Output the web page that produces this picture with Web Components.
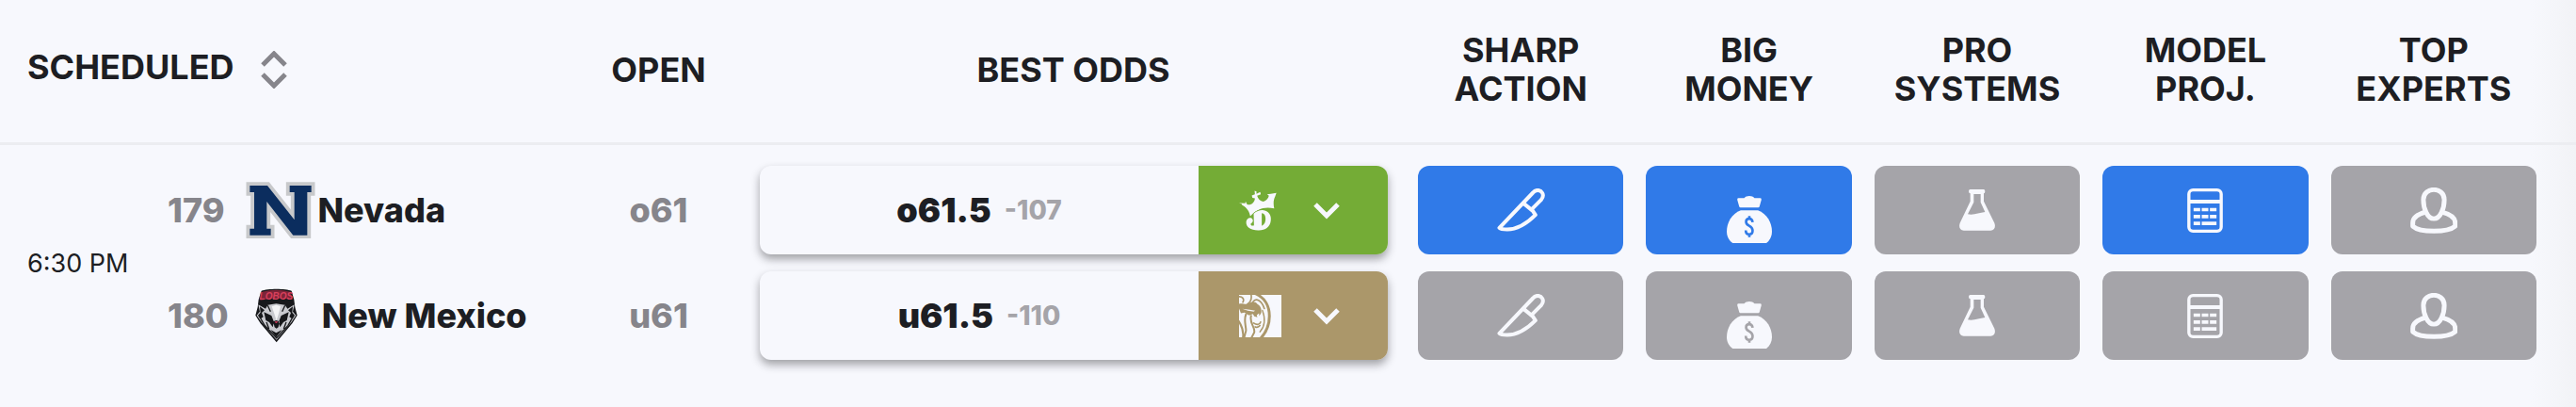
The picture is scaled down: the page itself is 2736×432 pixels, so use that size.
<!DOCTYPE html>
<html lang="en">
<head>
<meta charset="utf-8">
<meta name="viewport" content="width=device-width, initial-scale=1">
<title>Odds board</title>
<style>
  html { background: #f7f8fd; }
  body { margin: 0; font-family: Inter, "Liberation Sans", sans-serif; color: #1d1e23; }
</style>
</head>
<body>
<odds-board></odds-board>

<script>
const INK = '#f7f8fd';

const ICONS = {
  knife: { w: 51, h: 46, box: '87 91.500 152 138', art: `
    <g fill="none" stroke="${INK}" stroke-width="12" stroke-linejoin="round" stroke-linecap="round">
      <path d="M94 217L201 105C210 94 225 95 231 106C235 114 233 121 227 128L197 158L209 176C180 205 150 222 119 222C107 222 98 221 94 217Z"/>
      <path d="M172 140L197 160"/>
    </g>` },
  bag: { w: 48, h: 50, box: '816 113 145 151', lift: 20, art: `
    <path fill="${INK}" d="M854 120H872C879 111 898 111 905 120H923Q928 120 927 126L921 147Q920 150 917 150H860Q857 150 856 147L850 126Q849 120 854 120Z"/>
    <path fill="${INK}" d="M861 159H916C945 170 961 198 961 227C961 242 955 255 943 264H835C822 255 816 242 816 227C816 198 832 170 861 159Z"/>
    <path fill="none" stroke="var(--tile)" stroke-width="8" d="M899 197C898 189 894 186 888 186C881 186 878 190 878 196C878 211 899 206 899 224C899 232 895 236 888 236C881 236 877 232 877 223M888.500 177V187M888.500 235V245"/>` },
  flask: { w: 38, h: 44, box: '96 93 114 132', art: `
    <path fill="${INK}" fill-rule="evenodd" d="M131 93H173Q178 93 178 99Q178 106 174 106V131L208 200C213 214 207 223 196 224H110C99 223 93 214 98 200L131 131V106Q126 106 126 99Q126 93 131 93ZM142 108V134L123 172C143 176 158 167 178 165L164 134V108Z"/>` },
  calculator: { w: 38, h: 47, box: '821 87 113 141', art: `
    <rect x="826" y="92" width="103" height="131" rx="13" fill="none" stroke="${INK}" stroke-width="10"/>
    <path fill="${INK}" d="M826 123H929V135H826ZM841 149H862V160H841ZM867 149H888V160H867ZM893 149H914V160H893ZM841 171H862V182H841ZM867 171H888V182H867ZM893 171H914V182H893ZM841 193H862V204H841ZM867 193H914V204H867Z"/>` },
  expert: { w: 50, h: 49, box: '269 84 151 148', art: `
    <g fill="none" stroke="${INK}" stroke-width="15" stroke-linejoin="round">
      <path d="M344.500 91C359 91 378 100 378 123C378 150 366 184 344.500 184C323 184 311 150 311 123C311 100 330 91 344.500 91Z"/>
      <path d="M318 163C292 170 277 182 277 197V208C300 229 389 229 413 208V197C413 182 397 170 371 163"/>
    </g>` }
};

const LOGOS = {
  nevada: { w: 74, h: 60, box: '64 67 222 180', art: `
    <path fill="none" stroke="#c8c9cb" stroke-width="23" d="M77 79H133L219 188V100H204V79H273V100H260V237H215L131 130V216H144V237H77V216H91V100H77Z"/>
    <path fill="#0b2d5e" d="M77 79H133L219 188V100H204V79H273V100H260V237H215L131 130V216H144V237H77V216H91V100H77Z"/>` },
  lobos: { w: 74, h: 60, box: '76 403 222 180', art: `
    <path fill="#17181b" d="M114 414C132 406 192 406 210 414L218 442L221 466L228 492L212 518L162 578L111 518L95 492L102 466L105 442Z"/>
    <path fill="#7d2438" d="M117 417Q161 405 206 417L213 442Q161 434 110 444Z"/>
    <text x="161" y="442" text-anchor="middle" font-family="Liberation Sans" font-weight="700" font-style="italic" font-size="30" fill="#d8405c">LOBOS</text>
    <path fill="#c9cacf" d="M104 458L127 471L134 459L161 455L189 459L197 471L219 458L214 480L224 492L209 515L162 570L115 515L99 492L109 480Z"/>
    <path fill="#17181b" d="M109 464L124 476L115 484L120 497L110 504L103 492L111 483ZM214 464L199 476L208 484L203 497L213 504L220 492L212 483ZM122 482L146 493L154 513L150 530L139 514L128 508ZM201 482L177 493L169 513L173 530L184 514L195 508ZM151 512L161 508L172 512L168 530L162 534L156 530ZM161 562L143 538L161 548L180 538Z"/>
    <path fill="none" stroke="#17181b" stroke-width="4" d="M112 503L124 524L162 564L199 524L211 503M130 514L138 535M193 514L185 535M134 461L143 480M189 461L180 480"/>
    <path fill="#f4f4f6" d="M147 464L161 459L175 464L169 487L162 509L155 487Z"/>
    <path fill="#b8334e" d="M156 511H167L163 517H159Z"/>` },
  crown: { w: 40, h: 43, box: '176 94 121 129', art: `
    <path fill="${INK}" d="M226 95L232 97V105L244 99L246 106L234 111C237 121 244 128 254 130C264 127 270 119 272 111L266 106L278 105L296 102L292 113C286 124 286 138 289 152C258 144 233 154 212 177C210 163 202 149 186 141L185 137L176 134L196 135L197 129L202 139C216 142 226 132 227 119L219 118L217 110L227 106Z"/>
    <path fill="${INK}" fill-rule="evenodd" stroke="var(--tile)" stroke-width="4" paint-order="stroke" d="M223 168C235 158 250 155 261 159C275 164 280 178 278 191C276 211 260 223 237 222C213 222 198 211 199 195C200 185 208 180 216 183C223 188 222 197 214 200C212 206 218 209 224 206ZM249 167V208C259 202 262 193 261 182C260 173 257 168 249 167Z"/>` },
  lion: { w: 45, h: 45, box: '168 427 134 134', art: `
    <path fill="${INK}" d="M168 427H302V561H168Z"/>
    <g fill="none" stroke="var(--tile)" stroke-linecap="round">
      <path stroke-width="9" d="M222 424C250 437 264 464 264 494C264 523 254 546 235 566"/>
      <path stroke-width="5" d="M206 425C209 440 204 450 195 456M166 433C178 431 186 440 180 450M212 449C222 434 240 446 248 470"/>
      <path stroke-width="6" d="M190 488C182 507 190 523 190 540L184 563M206 493C200 519 220 527 216 546L207 563M167 510C176 524 184 541 180 563"/>
      <path stroke-width="4" d="M242 476C251 500 250 526 234 544"/>
      <path stroke-width="5" d="M219 528Q228 532 234 524M214 516C225 523 234 521 236 513"/>
    </g>
    <path fill="var(--tile)" d="M168 455C180 452 189 460 199 454C211 447 221 449 226 456C236 461 240 472 238 484L232 494L231 485L224 491L226 498L216 495L212 487L200 492L185 483L174 485L168 470Z"/>
    <path fill="${INK}" d="M178 471L202 474L219 477L214 480L196 477Z"/>` }
};

const drawing = d =>
  `<svg width="${d.w}" height="${d.h}" viewBox="${d.box}" aria-hidden="true">${d.art}</svg>`;

class SignalTile extends HTMLElement {
  constructor() {
    super();
    const icon = ICONS[this.getAttribute('icon')];
    this.attachShadow({ mode: 'open' }).innerHTML = `
      <style>
        :host { display: block; --tile: #a5a4a9; }
        :host([active]) { --tile: #307ae8; }
        button { display: flex; align-items: center; justify-content: center; box-sizing: border-box;
          width: 100%; height: 94px; padding: ${icon.lift || 0}px 0 0; border: 0; border-radius: 12px;
          background: var(--tile); cursor: pointer; }
        svg { display: block; }
      </style>
      <button type="button" aria-label="${this.getAttribute('label')}">${drawing(icon)}</button>`;
  }
}
customElements.define('signal-tile', SignalTile);

class BestOdds extends HTMLElement {
  constructor() {
    super();
    this.attachShadow({ mode: 'open' }).innerHTML = `
      <style>
        :host { display: flex; height: 94px; border-radius: 12px; overflow: hidden;
          background: #f7f8fd; box-shadow: 0 5px 10px rgba(29, 30, 35, .4); }
        :host([book="crown"]) { --tile: #74ac36; }
        :host([book="lion"]) { --tile: #ab976a; }
        .line { flex: 1; display: flex; align-items: center; justify-content: center; gap: 14px;
          font-size: 36px; font-weight: 900; }
        .price { font-size: 28px; font-weight: 800; color: #a5a4a9; }
        button { display: flex; align-items: center; justify-content: space-between; width: 201px;
          padding: 0 50px 0 43px; border: 0; background: var(--tile); cursor: pointer; }
        svg { display: block; }
      </style>
      <div class="line"><slot></slot><span class="price"><slot name="price"></slot></span></div>
      <button type="button" aria-label="Choose sportsbook">
        ${drawing(LOGOS[this.getAttribute('book')])}
        <svg width="30" height="20" viewBox="0 0 30 20" aria-hidden="true"><path d="M3 4L15 16L27 4" fill="none" stroke="${INK}" stroke-width="5"/></svg>
      </button>`;
  }
}
customElements.define('best-odds', BestOdds);

class TeamLabel extends HTMLElement {
  constructor() {
    super();
    this.attachShadow({ mode: 'open' }).innerHTML = `
      <style>
        :host { display: flex; align-items: center; font-size: 36px; font-weight: 800; white-space: nowrap; }
        .number { color: #86858b; margin-right: 22px; }
        svg { display: block; margin-right: 3px; }
      </style>
      <span class="number"><slot name="number"></slot></span>${drawing(LOGOS[this.getAttribute('logo')])}<slot></slot>`;
  }
}
customElements.define('team-label', TeamLabel);

class SortButton extends HTMLElement {
  constructor() {
    super();
    this.attachShadow({ mode: 'open' }).innerHTML = `
      <style>
        :host { display: block; }
        button { display: flex; align-items: flex-start; gap: 28px; padding: 0 0 3px; border: 0; background: none;
          font: inherit; color: inherit; text-transform: inherit; cursor: pointer; }
        svg { display: block; margin-top: 3px; }
      </style>
      <button type="button"><slot></slot>
        <svg width="28" height="40" viewBox="0 0 28 40" aria-hidden="true"><path d="M2 15L14 3L26 15M2 25L14 37L26 25" fill="none" stroke="#86858b" stroke-width="5"/></svg>
      </button>`;
  }
}
customElements.define('sort-button', SortButton);

const tiles = active => [
  ['knife', 'Sharp action'], ['bag', 'Big money'], ['flask', 'Pro systems'],
  ['calculator', 'Model projections'], ['expert', 'Top experts']
].map(([icon, label]) =>
  `<td class="signal"><signal-tile icon="${icon}" label="${label}"${active.includes(icon) ? ' active' : ''}></signal-tile></td>`
).join('');

class OddsBoard extends HTMLElement {
  constructor() {
    super();
    this.attachShadow({ mode: 'open' }).innerHTML = `
      <style>
        :host { display: block; min-height: 100vh;
          background: linear-gradient(to left, #f2f3f6, #f7f8fd 48px); }
        table { width: 100%; table-layout: fixed; border-collapse: separate; border-spacing: 0; }
        .c-time { width: 178px; } .c-team { width: 435px; } .c-open { width: 173px; }
        .c-best { width: 708px; } .c-edge { width: 30px; }
        th { height: 148px; padding: 0 0 3px; border-bottom: 3px solid #ecedf1;
          font-size: 36px; line-height: 41px; font-weight: 700; text-transform: uppercase; text-align: center; }
        th:first-child { padding-left: 29px; }
        tbody::before { content: ""; display: table-row; height: 13px; }
        td { height: 112px; padding: 0; vertical-align: middle; }
        .time { padding-left: 29px; font-size: 27px; white-space: nowrap; }
        .open { font-size: 36px; font-weight: 800; color: #86858b; text-align: center; }
        .best { padding: 0 20px 0 21px; }
        .signal { padding: 0 12px; }
      </style>
      <table>
        <colgroup>
          <col class="c-time"><col class="c-team"><col class="c-open"><col class="c-best">
          <col span="5"><col class="c-edge">
        </colgroup>
        <thead>
          <tr>
            <th scope="col" colspan="2"><sort-button>Scheduled</sort-button></th>
            <th scope="col">Open</th>
            <th scope="col">Best Odds</th>
            <th scope="col">Sharp<br>Action</th>
            <th scope="col">Big<br>Money</th>
            <th scope="col">Pro<br>Systems</th>
            <th scope="col">Model<br>Proj.</th>
            <th scope="col">Top<br>Experts</th>
            <th aria-hidden="true"></th>
          </tr>
        </thead>
        <tbody>
          <tr>
            <td class="time" rowspan="2">6:30 PM</td>
            <td><team-label logo="nevada"><span slot="number">179</span>Nevada</team-label></td>
            <td class="open">o61</td>
            <td class="best"><best-odds book="crown">o61.5<span slot="price">-107</span></best-odds></td>
            ${tiles(['knife', 'bag', 'calculator'])}
            <td></td>
          </tr>
          <tr>
            <td><team-label logo="lobos"><span slot="number">180</span>New Mexico</team-label></td>
            <td class="open">u61</td>
            <td class="best"><best-odds book="lion">u61.5<span slot="price">-110</span></best-odds></td>
            ${tiles([])}
            <td></td>
          </tr>
        </tbody>
      </table>`;
  }
}
customElements.define('odds-board', OddsBoard);
</script>
</body>
</html>
